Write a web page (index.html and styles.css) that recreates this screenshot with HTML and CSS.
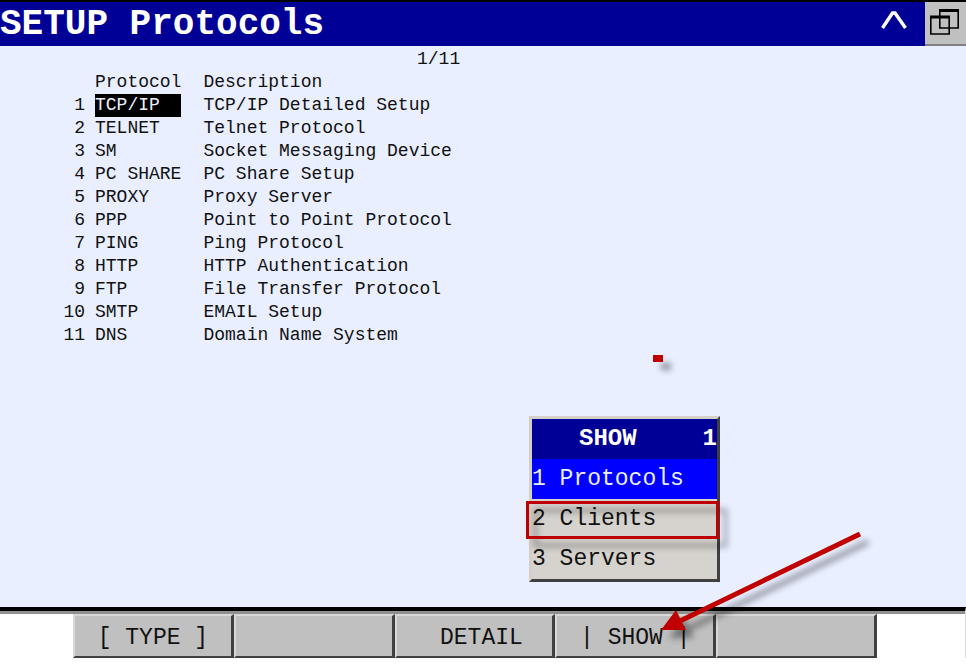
FILE: index.html
```html
<!DOCTYPE html>
<html lang="en">
  <head>
    <meta charset="UTF-8" />
    <meta name="viewport" content="width=device-width, initial-scale=1.0" />
    <title>SETUP Protocols</title>
    <link rel="stylesheet" href="styles.css">
  </head>
  <body>
    <header class="title-bar">
      <h1>SETUP Protocols</h1>
      <button class="collapse" type="button" aria-label="Collapse">
        <svg width="28" height="20" viewBox="0 0 28 20">
          <path d="M2.500 18 L12.500 3 H15 L25.500 18" fill="none" stroke="#fff" stroke-width="3.400" />
        </svg>
      </button>
      <button class="windows" type="button" aria-label="Windows">
        <svg width="31" height="28" viewBox="0 0 31 28" fill="none" stroke="#000">
          <path d="M10 2.500 H30" stroke-width="3" />
          <path d="M10.800 2 V20 H29.200 V2" stroke-width="1.600" />
          <path d="M1 9 H21" stroke-width="3" />
          <path d="M1.800 9 V26 H20.200 V9" stroke-width="1.600" />
        </svg>
      </button>
    </header>

    <main class="screen">
      <p class="position">1/11</p>
      <table class="protocols">
        <thead>
          <tr><th class="num"></th><th class="name">Protocol</th><th>Description</th></tr>
        </thead>
        <tbody>
          <tr><td class="num">1</td><td class="name"><span class="cursor">TCP/IP</span></td><td>TCP/IP Detailed Setup</td></tr>
          <tr><td class="num">2</td><td class="name">TELNET</td><td>Telnet Protocol</td></tr>
          <tr><td class="num">3</td><td class="name">SM</td><td>Socket Messaging Device</td></tr>
          <tr><td class="num">4</td><td class="name">PC SHARE</td><td>PC Share Setup</td></tr>
          <tr><td class="num">5</td><td class="name">PROXY</td><td>Proxy Server</td></tr>
          <tr><td class="num">6</td><td class="name">PPP</td><td>Point to Point Protocol</td></tr>
          <tr><td class="num">7</td><td class="name">PING</td><td>Ping Protocol</td></tr>
          <tr><td class="num">8</td><td class="name">HTTP</td><td>HTTP Authentication</td></tr>
          <tr><td class="num">9</td><td class="name">FTP</td><td>File Transfer Protocol</td></tr>
          <tr><td class="num">10</td><td class="name">SMTP</td><td>EMAIL Setup</td></tr>
          <tr><td class="num">11</td><td class="name">DNS</td><td>Domain Name System</td></tr>
        </tbody>
      </table>

      <div class="menu">
        <div class="menu-title"><span>SHOW</span><span>1</span></div>
        <button class="menu-item selected" type="button">1 Protocols</button>
        <button class="menu-item" type="button">2 Clients</button>
        <button class="menu-item" type="button">3 Servers</button>
        <div class="callout"></div>
      </div>
      <div class="mark"></div>
      <svg class="arrow" width="220" height="120" viewBox="0 0 220 120">
        <path d="M210 14 L30 101" stroke="#c00000" stroke-width="5" />
        <path d="M11 110 L26 90 L36 110 Z" fill="#c00000" />
      </svg>
    </main>

    <nav class="softkeys">
      <button type="button">[ TYPE ]</button>
      <button type="button" aria-label="F2"></button>
      <button type="button"> DETAIL</button>
      <button type="button">| SHOW |</button>
      <button type="button" aria-label="F5"></button>
    </nav>
  </body>
</html>
```
FILE: styles.css
```css
* {
  box-sizing: border-box;
}
body {
  margin: 0;
  min-height: 100vh;
  padding-bottom: 6px;
  display: flex;
  flex-direction: column;
  background-color: #fff;
  color: #111;
  font-family: "Liberation Mono", "Courier New", monospace;
}
button {
  margin: 0;
  padding: 0;
  border: none;
  border-radius: 0;
  background: none;
  color: inherit;
  font: inherit;
}

/* title bar */
.title-bar {
  display: flex;
  height: 46px;
  border-top: 2px solid #000;
  background-color: #000096;
  color: #fff;
}
.title-bar h1 {
  flex: 1;
  margin: 0;
  font-size: 36px;
  line-height: 46px;
  white-space: nowrap;
}
.collapse {
  width: 62px;
  padding-bottom: 8px;
}
.windows {
  width: 41px;
  padding-bottom: 2px;
  border-bottom: 2px solid #808080;
  background-color: #c0c0c0;
}
.title-bar svg {
  display: block;
  margin: 0 auto;
}
.title-bar .windows svg {
  margin-left: 4px;
}

/* protocol list */
.screen {
  position: relative;
  flex: 1;
  padding-top: 2px;
  background-color: #e9efff;
  font-size: 18px;
  line-height: 23px;
}
.position {
  margin: 0;
  padding-left: 417px;
}
.protocols {
  border-collapse: collapse;
}
.protocols th,
.protocols td {
  padding: 0;
  font-weight: normal;
  text-align: left;
  white-space: nowrap;
}
.protocols .num {
  width: 95px;
  padding-right: 10px;
  text-align: right;
}
.protocols .name {
  width: 108px;
  padding-right: 22px;
}
.cursor {
  display: block;
  background-color: #000;
  color: #e9efff;
}

/* SHOW popup */
.menu {
  position: absolute;
  left: 529px;
  bottom: 25px;
  width: 191px;
  border: 3px solid #404040;
  border-top-color: #d4d0c8;
  border-left-color: #d4d0c8;
  background-color: #d6d3ce;
  font-size: 23px;
  line-height: 40px;
}
.menu-title {
  display: flex;
  justify-content: space-between;
  padding-left: 47px;
  background-color: #000096;
  color: #fff;
  font-weight: bold;
  font-size: 24px;
}
.menu-item {
  display: block;
  width: 100%;
  text-align: left;
}
.menu-item.selected {
  background-color: #0000ff;
  color: #e9efff;
}

/* red annotations */
.callout {
  position: absolute;
  top: 82px;
  left: -6px;
  width: 193px;
  height: 38px;
  border: 3px solid #c00000;
  filter: drop-shadow(8px 8px 3px rgba(0, 0, 0, 0.4));
  pointer-events: none;
}
.mark {
  position: absolute;
  left: 653px;
  bottom: 245px;
  width: 10px;
  height: 7px;
  background-color: #c00000;
  filter: drop-shadow(8px 8px 3px rgba(0, 0, 0, 0.4));
}
.arrow {
  position: absolute;
  z-index: 1;
  left: 650px;
  bottom: -33px;
  filter: drop-shadow(8px 8px 3px rgba(0, 0, 0, 0.4));
  pointer-events: none;
}

/* function keys */
.softkeys {
  display: grid;
  grid-template-columns: repeat(5, 1fr);
  padding: 0 88px 0 73px;
  border-top: 4px solid #000;
  border-right: 1px solid #ddd;
  box-shadow: inset 0 3px #909090;
  font-size: 23px;
}
.softkeys button {
  height: 44px;
  margin-top: 3px;
  padding-top: 4px;
  border: 2px solid #404040;
  border-top-color: #d8d8d8;
  border-left-color: #d8d8d8;
  border-right-width: 3px;
  background-color: #c0c0c0;
  white-space: pre;
}
```
